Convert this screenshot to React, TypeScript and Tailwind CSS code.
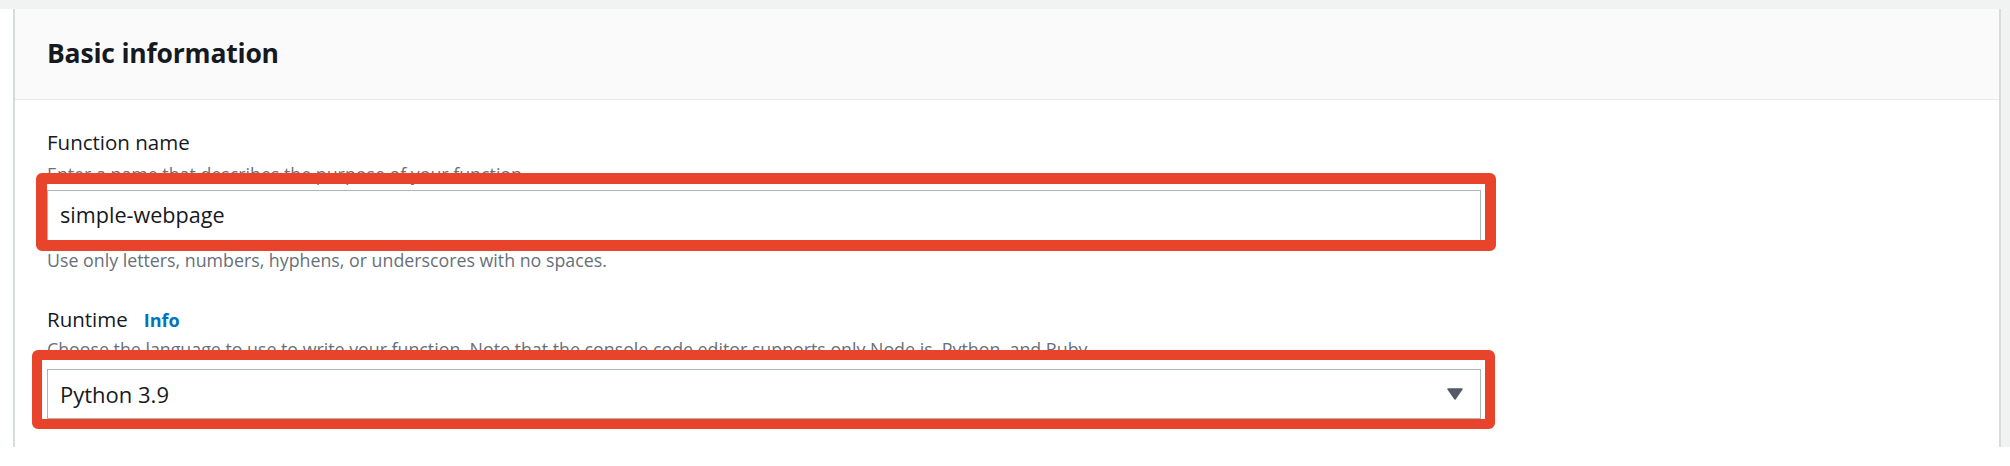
const labelCls = 'text-[20.5px] leading-[28px] text-[#16191f]';
const descCls = 'text-[17.8px] leading-[24px] text-[#687078]';

function Field({
  label,
  info,
  desc,
  descGap = 'mt-[6px]',
  className = '',
  children,
}: {
  label: string;
  info?: boolean;
  desc: string;
  descGap?: string;
  className?: string;
  children: React.ReactNode;
}) {
  return (
    <div className={className}>
      <div className="flex items-baseline gap-[16px]">
        <span className={labelCls}>{label}</span>
        {info && <span className="text-[18px] font-bold text-[#0073bb]">Info</span>}
      </div>
      <p className={`${descGap} whitespace-nowrap ${descCls}`}>{desc}</p>
      {children}
    </div>
  );
}

export default function App() {
  return (
    <div
      className="relative w-[2010px] h-[466px] bg-white overflow-hidden"
      style={{ fontFamily: '"Open Sans", "Noto Sans", Arial, sans-serif' }}
    >
      {/* page background strip above the card */}
      <div className="h-[9px] bg-[#f1f2f2]" />

      <div className="flex h-[438px]">
        <div className="w-[13px] bg-white" />

        {/* Card */}
        <section className="flex-1 flex flex-col bg-white border-l-2 border-r-2 border-[#d6dbdb]">
          <header className="h-[91px] flex items-center pl-[32px] bg-[#fafafa] border-b border-[#e8eaea]">
            <h2 className="text-[26.5px] font-bold text-[#16191f] tracking-[-0.2px]">Basic information</h2>
          </header>

          <div className="pl-[32px] pt-[28px]">
            <Field label="Function name" desc="Enter a name that describes the purpose of your function.">
              <div className="mt-[4px] w-[1434px] h-[51px] flex items-center pl-[12px] border border-[#aab7b8] bg-white">
                <span className="text-[21.6px] text-[#16191f]">simple-webpage</span>
              </div>
              <p className={`mt-[7px] ${descCls}`}>Use only letters, numbers, hyphens, or underscores with no spaces.</p>
            </Field>

            <Field
              className="mt-[33px]"
              label="Runtime"
              info
              descGap="mt-[3px]"
              desc="Choose the language to use to write your function. Note that the console code editor supports only Node.js, Python, and Ruby."
            >
              <div className="mt-[8px] w-[1434px] h-[50px] flex items-center justify-between pl-[12px] pr-[17px] border border-[#aab7b8] bg-white">
                <span className="text-[22px] text-[#16191f]">Python 3.9</span>
                <svg width="16" height="12" viewBox="0 0 16 12" fill="#545b64">
                  <path d="M1 1h14l-7 10z" stroke="#545b64" strokeWidth="1.5" strokeLinejoin="round" />
                </svg>
              </div>
            </Field>
          </div>
        </section>

        <div className="w-[9px] bg-[#f1f2f2]" />
      </div>

      {/* red annotation boxes drawn over the form */}
      <div className="absolute left-[36px] top-[173px] w-[1460px] h-[78px] border-[11px] border-[#e8432b] rounded-[6px]" />
      <div className="absolute left-[32px] top-[350px] w-[1463px] h-[79px] border-[10px] border-[#e8432b] rounded-[6px]" />
    </div>
  );
}
